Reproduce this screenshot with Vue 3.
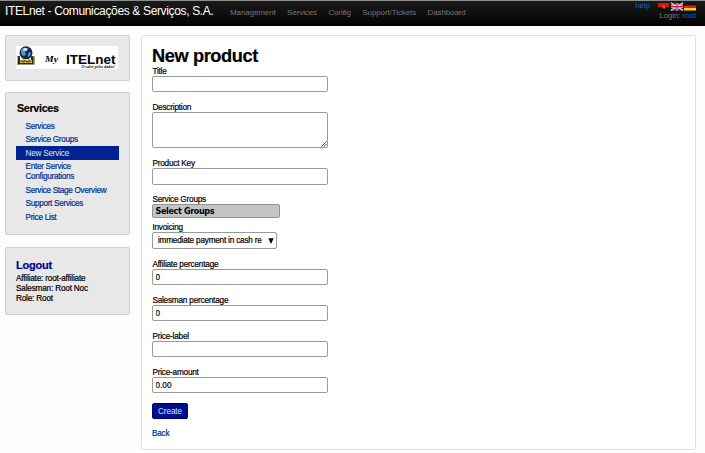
<script setup>
import { ref } from 'vue'

const menu = ['Management', 'Services', 'Config', 'Support/Tickets', 'Dashboard']
const services = [
  'Services',
  'Service Groups',
  'New Service',
  'Enter Service Configurations',
  'Service Stage Overview',
  'Support Services',
  'Price List',
]
const active = ref('New Service')
const fields = ref([
  { label: 'Title', kind: 'text', value: '' },
  { label: 'Description', kind: 'area', value: '' },
  { label: 'Product Key', kind: 'text', value: '', cls: 'key' },
  { label: 'Service Groups', kind: 'groups' },
  { label: 'Invoicing', kind: 'select' },
  { label: 'Affiliate percentage', kind: 'text', value: '0' },
  { label: 'Salesman percentage', kind: 'text', value: '0' },
  { label: 'Price-label', kind: 'text', value: '' },
  { label: 'Price-amount', kind: 'text', value: '0.00' },
])
</script>

<template>
  <div class="page">
    <header class="bar">
      <div class="brand">ITELnet - Comunicações &amp; Serviços, S.A.</div>
      <nav class="menu">
        <a v-for="m in menu" :key="m">{{ m }}</a>
      </nav>
      <div class="account">
        <div class="top">
          <a class="help">help</a>
          <svg class="flags" width="38" height="9" viewBox="0 0 38 9">
            <rect x="0" y="1" width="11" height="4" fill="#e00d14" />
            <rect x="0" y="5" width="11" height="3.5" fill="#090909" />
            <path d="M4.4 4.2Q6.5 2.7 7 4.8Q6.8 6.5 4.5 6M4.2 4.7L7.4 6.4" fill="none" stroke="#d49217" stroke-width=".8" />
            <rect x="13" y="1" width="12" height="7.5" fill="#202b6b" />
            <path d="M13 1L25 8.5M25 1L13 8.5" stroke="#eee" stroke-width="1.5" />
            <path d="M13 1L25 8.5M25 1L13 8.5" stroke="#cc2b3c" stroke-width=".5" />
            <path d="M19 1V8.5M13 4.75H25" stroke="#fff" stroke-width="2.4" />
            <path d="M19 1V8.5M13 4.75H25" stroke="#d31930" stroke-width="1.3" />
            <rect x="26" y="1" width="12" height="2.5" fill="#111" />
            <rect x="26" y="3.5" width="12" height="2.5" fill="#ed1414" />
            <rect x="26" y="6" width="12" height="2.5" fill="#ffd31a" />
          </svg>
        </div>
        <div class="login">Login: <a>root</a></div>
      </div>
    </header>

    <div class="body">
      <aside>
        <section class="panel logo">
          <svg width="102" height="23" viewBox="0 0 102 23">
            <rect width="102" height="23" fill="#fff" />
            <path d="M1 10.5L4 10V15H15V10L18.5 10.5V18.5H1Z" fill="#2c2718" />
            <path d="M1.5 11V17.8M18 11V17.8" stroke="#d3bb34" stroke-width="1" />
            <circle cx="10" cy="6.8" r="6.5" fill="#142653" />
            <path d="M5 4Q7 1 10 2L12 4L9 6L10 9L7 10L5 7ZM12 7L15 6L14 10L12 11Z" fill="#6393c5" />
            <path d="M8 2L12 2.5L10 5L7 4Z" fill="#dbe9f1" />
            <path d="M4 14.2L7 13L10 14L13 13L16 14V17H4Z" fill="#d6c434" />
            <path d="M4.5 14.5L7 16L9 14.5L11 16L14 14.5L15 16" fill="none" stroke="#302c29" stroke-width="1" />
            <path d="M8 14V17M13 14V17" stroke="#b52d22" stroke-width=".7" />
            <text class="script" x="29" y="16.2" textLength="13" lengthAdjust="spacingAndGlyphs">My</text>
            <text class="wordmark" x="50" y="17.6" textLength="49.5" lengthAdjust="spacingAndGlyphs">ITELnet</text>
            <text class="motto" x="65.5" y="22" textLength="33.5" lengthAdjust="spacingAndGlyphs">O valor pelos dados!</text>
          </svg>
        </section>
        <section class="panel services">
          <h3>Services</h3>
          <ul>
            <li v-for="s in services" :key="s" :class="{ active: s === active }">
              <a @click="active = s">{{ s }}</a>
            </li>
          </ul>
        </section>
        <section class="panel session">
          <h3><a>Logout</a></h3>
          <p>Affiliate: root-affiliate</p>
          <p>Salesman: Root Noc</p>
          <p>Role: Root</p>
        </section>
      </aside>

      <main>
        <h1>New product</h1>
        <form @submit.prevent>
          <div v-for="f in fields" :key="f.label" class="field" :class="[f.kind, f.cls]">
            <label>{{ f.label }}</label>
            <input v-if="f.kind === 'text'" v-model="f.value" class="control" type="text" />
            <div v-else-if="f.kind === 'area'" class="control">
              <textarea v-model="f.value"></textarea>
              <svg class="grip" width="6" height="6" viewBox="0 0 6 6">
                <path d="M.5 5.5L5.5 .5M3 5.5L5.5 3" stroke="#444" stroke-width=".9" />
              </svg>
            </div>
            <div v-else-if="f.kind === 'groups'" class="control">Select Groups</div>
            <div v-else class="control">
              <span>immediate payment in cash re</span>
              <svg width="6" height="6" viewBox="0 0 6 6"><path d="M.3 .2H5.7L3 5.9Z" fill="#000" /></svg>
            </div>
          </div>
          <button type="submit">Create</button>
        </form>
        <a class="back">Back</a>
      </main>
    </div>
  </div>
</template>

<style>
body {
  background: #fdfdfd;
}
</style>

<style scoped>
* {
  box-sizing: border-box;
}
.page {
  height: 453px;
  overflow: hidden;
  font: 8.2px/10px "Liberation Sans", Arial, sans-serif;
  letter-spacing: -0.2px;
  color: #000;
  -webkit-text-stroke: 0.2px currentColor;
}
h1,
h3,
p,
ul {
  margin: 0;
  padding: 0;
}
.bar {
  display: flex;
  height: 26px;
  padding-left: 5px;
  background: linear-gradient(#1b1b1b, #020202);
  border-top: 1px solid #8b8e8b;
}
.brand {
  width: 225px;
  padding-top: 2px;
  color: #fff;
  font-size: 12px;
  line-height: 16px;
  letter-spacing: -0.35px;
  white-space: nowrap;
  -webkit-text-stroke: 0;
}
.menu {
  display: flex;
  flex: 1;
  gap: 11.4px;
  padding-top: 7px;
  color: #757575;
  font-size: 8px;
  letter-spacing: -0.1px;
  -webkit-text-stroke: 0;
}
.account {
  width: 75px;
  padding-right: 9px;
  text-align: right;
  color: #777;
  font-size: 8px;
  letter-spacing: -0.1px;
  -webkit-text-stroke: 0;
}
.top {
  display: flex;
  justify-content: flex-end;
  gap: 8px;
  height: 10px;
}
.help,
.login a {
  color: #0b62c4;
}
.flags {
  display: block;
  margin-top: 1px;
}
.body {
  display: flex;
  gap: 11px;
  padding: 9px 9px 0 5px;
}
aside {
  width: 125px;
}
.panel {
  background: #e8e8e8;
  border: 1px solid #cfcfcf;
  border-radius: 2px;
}
.logo {
  height: 46px;
  padding: 10px 10px;
}
.logo svg {
  display: block;
  letter-spacing: 0;
}
.script {
  font: italic bold 9px "Liberation Serif", serif;
}
.wordmark {
  font: bold 13.5px "Liberation Sans", sans-serif;
}
.motto {
  font: italic bold 4px "Liberation Serif", serif;
}
.services {
  height: 143px;
  margin-top: 11px;
  padding: 8px 10px;
}
h3 {
  font-size: 10.7px;
  line-height: 15px;
  letter-spacing: -0.3px;
}
.services h3 {
  padding-left: 1px;
}
.services ul {
  padding-top: 3px;
  list-style: none;
}
.services li {
  padding: 2.5px 10px 1.1px 9.5px;
  color: #003091;
  letter-spacing: -0.3px;
}
.services li a {
  display: block;
  width: 85px;
}
.services li.active {
  background: #002391;
  color: #d9ecff;
  letter-spacing: -0.22px;
  -webkit-text-stroke: 0;
}
.session {
  height: 68px;
  margin-top: 12px;
  padding: 10px 10px;
}
.session h3 {
  height: 16px;
  font-size: 11px;
  letter-spacing: -0.2px;
  color: #000091;
}
.session p {
  letter-spacing: -0.18px;
}
main {
  width: 555px;
  height: 415px;
  padding: 10px;
  background: #fff;
  border: 1px solid #e1e1e1;
  border-radius: 3px;
}
h1 {
  height: 20px;
  font-size: 18.2px;
  line-height: 20px;
  letter-spacing: -0.38px;
}
.field {
  margin-bottom: 10px;
}
label {
  display: block;
  height: 10px;
  padding-left: 0.4px;
  line-height: 12px;
}
.control {
  display: block;
  width: 176px;
  height: 16px;
  border: 1px solid #999;
  border-radius: 2px;
  background: #fff;
}
input.control {
  padding: 0 2.5px;
  font: inherit;
  letter-spacing: 0;
  outline: none;
}
.key {
  margin-bottom: 9px;
}
.key .control {
  height: 17px;
}
.area .control {
  position: relative;
  height: 36px;
}
textarea {
  display: block;
  width: 100%;
  height: 100%;
  border: 0;
  padding: 2px;
  background: none;
  outline: none;
  resize: none;
  font: inherit;
}
.grip {
  position: absolute;
  right: 0;
  bottom: 0;
}
.groups {
  margin-bottom: 4px;
}
.groups .control {
  width: 128px;
  height: 14px;
  padding-left: 2.5px;
  background: #c4c4c4;
  border-color: #929292;
  font: bold 8.1px/13px "DejaVu Sans", sans-serif;
  letter-spacing: -0.38px;
  -webkit-text-stroke: 0;
}
.select .control {
  display: flex;
  align-items: center;
  justify-content: space-between;
  width: 125px;
  height: 17px;
  padding: 1px 2.5px 0 5px;
}
.select span {
  white-space: nowrap;
}
button {
  display: block;
  width: 36px;
  height: 16px;
  padding: 1px 0 0;
  border: 1px solid #00006c;
  border-radius: 2px;
  background: #00108c;
  color: #c9e3ff;
  font: inherit;
  letter-spacing: -0.1px;
  -webkit-text-stroke: 0;
}
.back {
  display: block;
  margin-top: 10px;
  color: #003091;
}
</style>
